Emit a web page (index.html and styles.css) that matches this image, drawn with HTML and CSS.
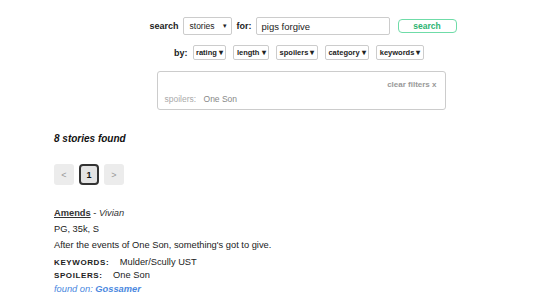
FILE: index.html
```html
<!DOCTYPE html>
<html lang="en">
	<head>
		<meta charset="UTF-8" />
		<title>Search</title>
		<link rel="stylesheet" href="styles.css">
	</head>
	<body>
		<div class="search-area">
			<div class="search-row">
				<span class="label">search</span>
				<div class="select">stories <span class="caret">▾</span></div>
				<span class="label">for:</span>
				<div class="query">pigs forgive</div>
				<button class="search-btn">search</button>
			</div>
			<div class="by-row">
				<span class="label">by:</span>
				<button class="drop">rating ▾</button>
				<button class="drop">length ▾</button>
				<button class="drop">spoilers ▾</button>
				<button class="drop">category ▾</button>
				<button class="drop">keywords ▾</button>
			</div>
			<div class="filters">
				<div class="clear">clear filters x</div>
				<div class="active"><span class="key">spoilers:</span> One Son</div>
			</div>
		</div>
		<div class="results">
			<h2>8 stories found</h2>
			<div class="pager">
				<button class="page off">&lt;</button>
				<button class="page current">1</button>
				<button class="page off">&gt;</button>
			</div>
			<div class="story">
				<div class="title"><a href="#">Amends</a> - <i>Vivian</i></div>
				<div class="line">PG, 35k, S</div>
				<div class="line">After the events of One Son, something's got to give.</div>
				<div class="meta"><span class="tag">Keywords:</span> Mulder/Scully UST</div>
				<div class="meta"><span class="tag">Spoilers:</span> One Son</div>
				<div class="found">found on: <b>Gossamer</b></div>
			</div>
		</div>
	</body>
</html>
```
FILE: styles.css
```css
body {
	margin: 0;
	font-family: 'Liberation Sans', Arial, sans-serif;
	color: #111;
	background: #fff;
}
.search-area {
	padding: 17px 0 0 62px;
	display: flex;
	flex-direction: column;
	align-items: center;
}
.search-row {
	display: flex;
	align-items: center;
	height: 18px;
	margin-left: 4px;
}
.label {
	font-weight: bold;
	color: #222;
	font-size: 9px;
}
.search-row .label:first-child {
	margin-right: 4px;
}
.select {
	width: 49px;
	height: 18px;
	border: 1px solid #ccc;
	border-radius: 2px;
	box-sizing: border-box;
	font-size: 8.5px;
	padding: 0 0 0 6px;
	display: flex;
	align-items: center;
	justify-content: space-between;
	margin-right: 5px;
	color: #222;
}
.caret {
	font-size: 7px;
	margin-right: 4px;
}
.query {
	width: 134px;
	height: 18px;
	border: 1px solid #ccc;
	border-radius: 2px;
	box-sizing: border-box;
	margin-left: 4px;
	padding: 0 5px;
	font-size: 9.5px;
	display: flex;
	align-items: center;
	color: #222;
}
.search-btn {
	margin-left: 8px;
	width: 59px;
	height: 14px;
	border: 1px solid #6fdca8;
	border-radius: 4px;
	background: #fff;
	color: #2cb472;
	font-family: inherit;
	font-weight: bold;
	font-size: 8.5px;
	padding: 0;
}
.by-row {
	display: flex;
	align-items: center;
	margin-top: 10px;
	height: 15px;
	margin-right: 4px;
}
.by-row .label {
	margin-right: -2px;
}
.drop {
	height: 15px;
	border: 1px solid #ccc;
	border-radius: 2px;
	background: #fff;
	font-family: inherit;
	font-weight: bold;
	font-size: 7.5px;
	color: #222;
	padding: 0 2.5px;
	margin-left: 7px;
}
.filters {
	margin-top: 11px;
	width: 289px;
	height: 39px;
	border: 1px solid #ccc;
	border-radius: 3px;
	box-sizing: border-box;
	padding: 8px 8px 0 7px;
	font-size: 8.5px;
	color: #999;
}
.clear {
	text-align: right;
	font-weight: bold;
	font-size: 8px;
	color: #999;
}
.active {
	margin-top: 5px;
	color: #888;
}
.key {
	color: #aaa;
	margin-right: 5px;
}
.results {
	padding: 0 54px;
}
h2 {
	font-size: 10px;
	font-style: italic;
	font-weight: bold;
	margin: 23px 0 0;
	color: #111;
}
.pager {
	display: flex;
	gap: 5px;
	margin-top: 20px;
}
.page {
	width: 20px;
	height: 21px;
	box-sizing: border-box;
	border: none;
	border-radius: 3px;
	background: #ececec;
	color: #999;
	font-family: inherit;
	font-size: 9px;
	padding: 0;
}
.page.current {
	border: 2px solid #333;
	background: #e4e4e4;
	color: #111;
	font-weight: bold;
	border-radius: 4px;
}
.story {
	margin-top: 20px;
	font-size: 9.3px;
	color: #222;
}
.title,
.line {
	line-height: 16px;
}
.title a {
	color: #333;
	font-weight: bold;
	text-decoration: underline;
}
.title i {
	color: #333;
}
.meta {
	margin-top: 3px;
	line-height: 12px;
}
.meta + .meta {
	margin-top: 0;
}
.tag {
	text-transform: uppercase;
	font-weight: bold;
	font-size: 8px;
	letter-spacing: 0.6px;
	margin-right: 8px;
}
.found {
	margin-top: 2px;
	font-style: italic;
	color: #4a88e0;
}
```
